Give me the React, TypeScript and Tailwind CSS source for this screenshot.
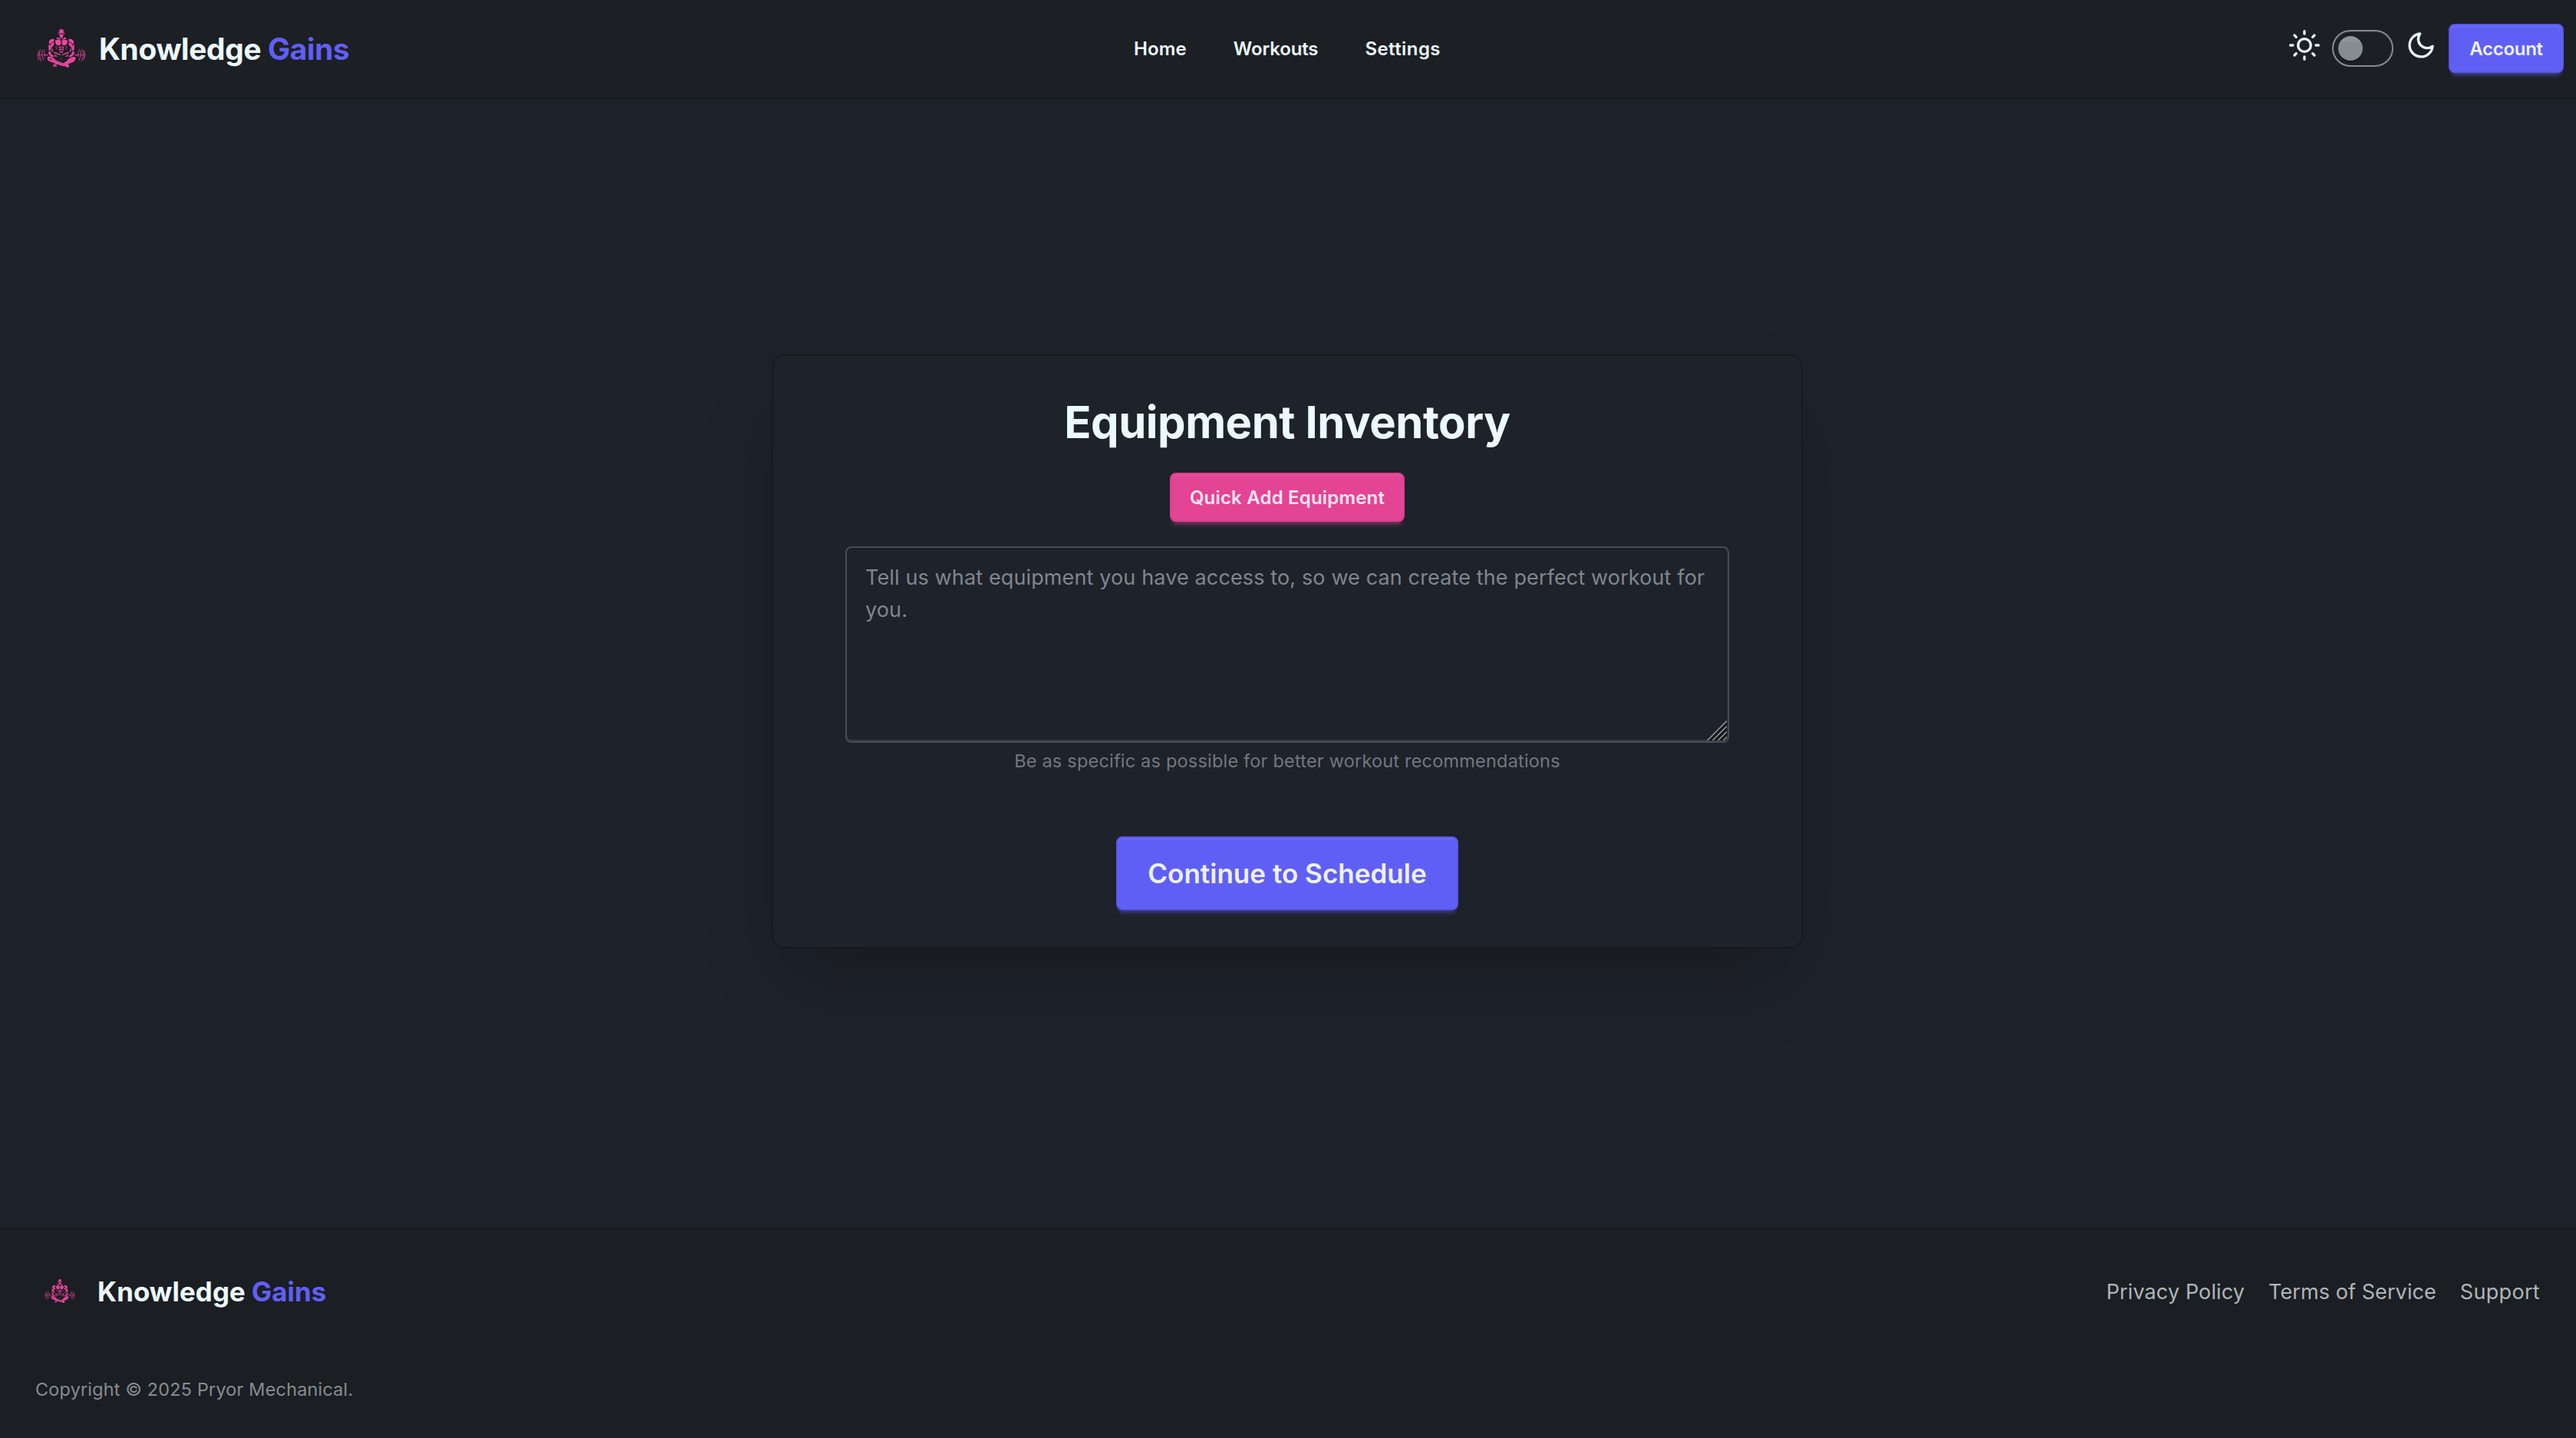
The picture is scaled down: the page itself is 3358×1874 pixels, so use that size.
import type { ReactNode } from "react";

function LogoMark({ className }: { className: string }) {
  return (
    <svg viewBox="0 0 192 150" className={className} fill="#ec45a0" stroke="none" aria-hidden="true">
      {/* head */}
      <path d="M88 3Q96-3 104 3L105 15Q96 18 87 15Z" />
      <path d="M88 18L94 19V22H98V19L104 18L103 28L99 35H93L89 28Z" />
      <rect x="83" y="13" width="2.5" height="8" rx="1.2" />
      <rect x="106.5" y="13" width="2.5" height="8" rx="1.2" />
      {/* torso, arms and barbell are drawn once and mirrored */}
      {[undefined, "translate(192 0) scale(-1 1)"].map((flip, i) => (
        <g key={i} transform={flip}>
          <path d="M82 31L92 38L94 41L76 38Z" />
          <path d="M72 44Q84 38 94 44V59Q84 68 75 59Q71 52 72 44Z" />
          <path d="M52 42Q58 35 69 40L66 49Q56 50 52 59L47 54Q47 47 52 42Z" />
          <path d="M57 54L67 52L68 59L58 72L53 66Z" />
          <path d="M46 60L52 62L57 72L52 86L46 80Z" />
          <path d="M47 86L53 88L57 98L68 106L62 110L50 103L45 94Z" />
          <path d="M57 78L61 75L63 86L59 90Z" />
          <path d="M73 67L80 70L79 72L73 70ZM74 74L80 77L79 79L75 78Z" />
          <path d="M86 69L94.5 67V72L86 74ZM86 77L94.5 75V81L88 83ZM89 86L94.5 84V94L91 92Z" />
          <path d="M66 88L92 98L94 103L80 98L68 94Z" />
          <path d="M67 98L77 102L82 108L71 108Z" opacity=".75" />
          <rect x="29" y="99" width="15" height="3.5" />
          <g fill="none" stroke="#ec45a0" strokeWidth="2.6" strokeLinecap="round">
            <path d="M30 92Q27 101 31 108" />
            <path d="M21 84Q16 102 26 121" />
            <path d="M13 79Q6 102 17 125" />
            <path d="M6 86Q0 102 8 120" />
            <path d="M25 80L29 88" />
            <path d="M3 101H24" strokeWidth="2" />
          </g>
        </g>
      ))}
      {/* crossed legs */}
      <g fill="none" stroke="#ec45a0" strokeLinecap="round" strokeLinejoin="round">
        <path d="M68 121Q52 106 45 112Q42 120 56 124L96 139L122 142" strokeWidth="8" />
        <path d="M62 119L98 133L118 136" strokeWidth="4" />
        <path d="M122 123Q142 108 148 113Q148 120 134 124L112 131" strokeWidth="8" />
        <path d="M144 125L110 139" strokeWidth="5" />
        <path d="M84 134L66 139" strokeWidth="4" />
        <path d="M66 145L76 143M116 146L124 147" strokeWidth="5" />
      </g>
      <path d="M90 117L96 114L102 117L96 121Z" opacity=".35" />
    </svg>
  );
}

function SunIcon() {
  return (
    <svg className="size-10" viewBox="0 0 24 24" fill="none" stroke="currentColor" strokeWidth="2" strokeLinecap="round" strokeLinejoin="round" aria-hidden="true">
      <circle cx="12" cy="12" r="5" />
      <path d="M12 1v2M12 21v2M4.2 4.2l1.4 1.4M18.4 18.4l1.4 1.4M1 12h2M21 12h2M4.2 19.8l1.4-1.4M18.4 5.6l1.4-1.4" />
    </svg>
  );
}

function MoonIcon() {
  return (
    <svg className="size-10" viewBox="0 0 24 24" fill="none" stroke="currentColor" strokeWidth="2" strokeLinecap="round" strokeLinejoin="round" aria-hidden="true">
      <path d="M21 12.79A9 9 0 1 1 11.21 3 7 7 0 0 0 21 12.79z" />
    </svg>
  );
}

function PrimaryButton({ className, children }: { className: string; children: ReactNode }) {
  return (
    <button
      className={`flex items-center justify-center rounded-lg border-2 border-[#5a58e6] bg-[#605ff5] font-semibold text-[#edf1fe] shadow-[inset_0_2px_0_0_#6b6af7,0_6px_4px_-4px_rgba(96,95,245,0.3),0_8px_6px_-4px_rgba(96,95,245,0.3)] ${className}`}
    >
      {children}
    </button>
  );
}

function Header() {
  return (
    <header className="relative z-10 grid h-[129px] grid-cols-[1fr_auto_1fr] items-center border-b-2 border-[#191b1f] bg-[#1c1f23] pr-4 pb-px pl-12 shadow-[0_6px_10px_-2px_rgba(0,0,0,0.08)]">
      <div className="flex items-center">
        <LogoMark className="h-[50px] w-16" />
        <span className="ml-[17px] pt-px text-[39px] leading-[50px] font-bold tracking-[-0.437px] whitespace-nowrap">
          Knowledge <span className="text-[#605ff5]">Gains</span>
        </span>
      </div>
      <nav className="mr-[34px] flex items-center gap-[61px] pt-0.5 text-2xl font-semibold">
        <a className="tracking-[0.128px]">Home</a>
        <a className="tracking-[-0.142px]">Workouts</a>
        <a className="tracking-[0.432px]">Settings</a>
      </nav>
      <div className="flex items-center justify-end gap-4">
        <div className="flex h-12 items-start gap-4">
          <SunIcon />
          <div className="flex h-12 w-20 items-center rounded-full border-2 border-[#868d91] px-1.5 shadow-[inset_0_2px_0_0_#25282c]">
            <div className="size-8 rounded-full bg-[linear-gradient(to_bottom,#8f9598_0%,#8f9598_25%,#858d93_26%)] shadow-[0_2px_1px_0_rgba(0,0,0,0.25)]" />
          </div>
          <MoonIcon />
        </div>
        <PrimaryButton className="h-16 w-[150px] pt-0.5 text-2xl tracking-[-0.292px]">Account</PrimaryButton>
      </div>
    </header>
  );
}

function ResizeGrip() {
  return (
    <svg className="pointer-events-none absolute right-[3px] bottom-[3px] size-[26px]" viewBox="0 0 26 26" fill="none" aria-hidden="true">
      <path d="M0 25L26 -1V26H0Z" fill="#171a1d" />
      <path d="M0.5 26L26 0.5M7.5 26L26 7.5M14.5 26L26 14.5M21.5 26L26 21.5" stroke="#9b9ea0" strokeWidth="1.5" />
    </svg>
  );
}

function EquipmentCard() {
  return (
    <section className="flex w-[1344px] flex-col items-center rounded-2xl border-2 border-[#171a1d] bg-[#1e222a] p-12 shadow-[0_50px_100px_-24px_rgba(0,0,0,0.25)]">
      <h1 className="mt-0.5 text-[58px] leading-[72px] font-bold tracking-[-0.461px]">Equipment Inventory</h1>
      <button className="mt-[30px] flex h-16 w-[306px] items-center justify-center rounded-lg border-2 border-[#d9418e] bg-[#e34494] pt-0.5 text-2xl font-semibold tracking-[0.185px] text-[#f9e4f0] shadow-[inset_0_2px_0_0_#e64f9b,0_6px_4px_-4px_rgba(227,68,148,0.3),0_8px_6px_-4px_rgba(227,68,148,0.3)]">
        Quick Add Equipment
      </button>
      <div className="relative mt-8 h-64 w-[1152px]">
        <textarea
          className="block h-full w-full resize-none rounded-lg border-2 border-[#484c55] bg-transparent px-6 pt-[18px] pb-4 text-[27px] leading-[42px] tracking-[0.13px] shadow-[inset_0_2px_0_0_#1b1f25,inset_0_-2px_0_0_#363a42] outline-none placeholder:text-[#81868f]"
          placeholder="Tell us what equipment you have access to, so we can create the perfect workout for you."
        />
        <ResizeGrip />
      </div>
      <p className="mt-2 text-[23.5px] leading-[31px] tracking-[0.2px] text-[#73787f]">
        Be as specific as possible for better workout recommendations
      </p>
      <PrimaryButton className="mt-[83px] h-24 w-[446px] pt-px text-[35px] tracking-[0.024px]">Continue to Schedule</PrimaryButton>
    </section>
  );
}

function Footer() {
  return (
    <footer className="relative h-[274px] border-t-2 border-[#17191d] bg-[#1b1e22] pt-[53px] pr-[47px] pl-[46px] shadow-[0_-2px_8px_0_rgba(0,0,0,0.06)]">
      <div className="flex h-14 items-center justify-between">
        <div className="flex items-center">
          <LogoMark className="mb-0.5 ml-3 h-[31px] w-10" />
          <span className="ml-7 pl-px text-[35px] leading-[56px] font-bold tracking-[-0.03px] whitespace-nowrap">
            Knowledge <span className="text-[#605ff5]">Gains</span>
          </span>
        </div>
        <nav className="flex items-center gap-[31px] pt-0.5 text-[27px] leading-[42px] text-[#afb6b9]">
          <a className="tracking-[0.115px]">Privacy Policy</a>
          <a className="tracking-[0.086px]">Terms of Service</a>
          <a className="tracking-[0.312px]">Support</a>
        </nav>
      </div>
      <p className="mt-[84px] text-[23.5px] leading-8 tracking-[0.15px] text-[#868d91]">Copyright © 2025 Pryor Mechanical.</p>
    </footer>
  );
}

export default function App() {
  return (
    <div className="flex min-h-screen flex-col bg-[#1e222a] font-['Inter',sans-serif] text-[#ecf9ff] antialiased">
      <Header />
      <main className="flex flex-1 items-center justify-center pr-0.5 pb-[31px]">
        <EquipmentCard />
      </main>
      <Footer />
    </div>
  );
}
